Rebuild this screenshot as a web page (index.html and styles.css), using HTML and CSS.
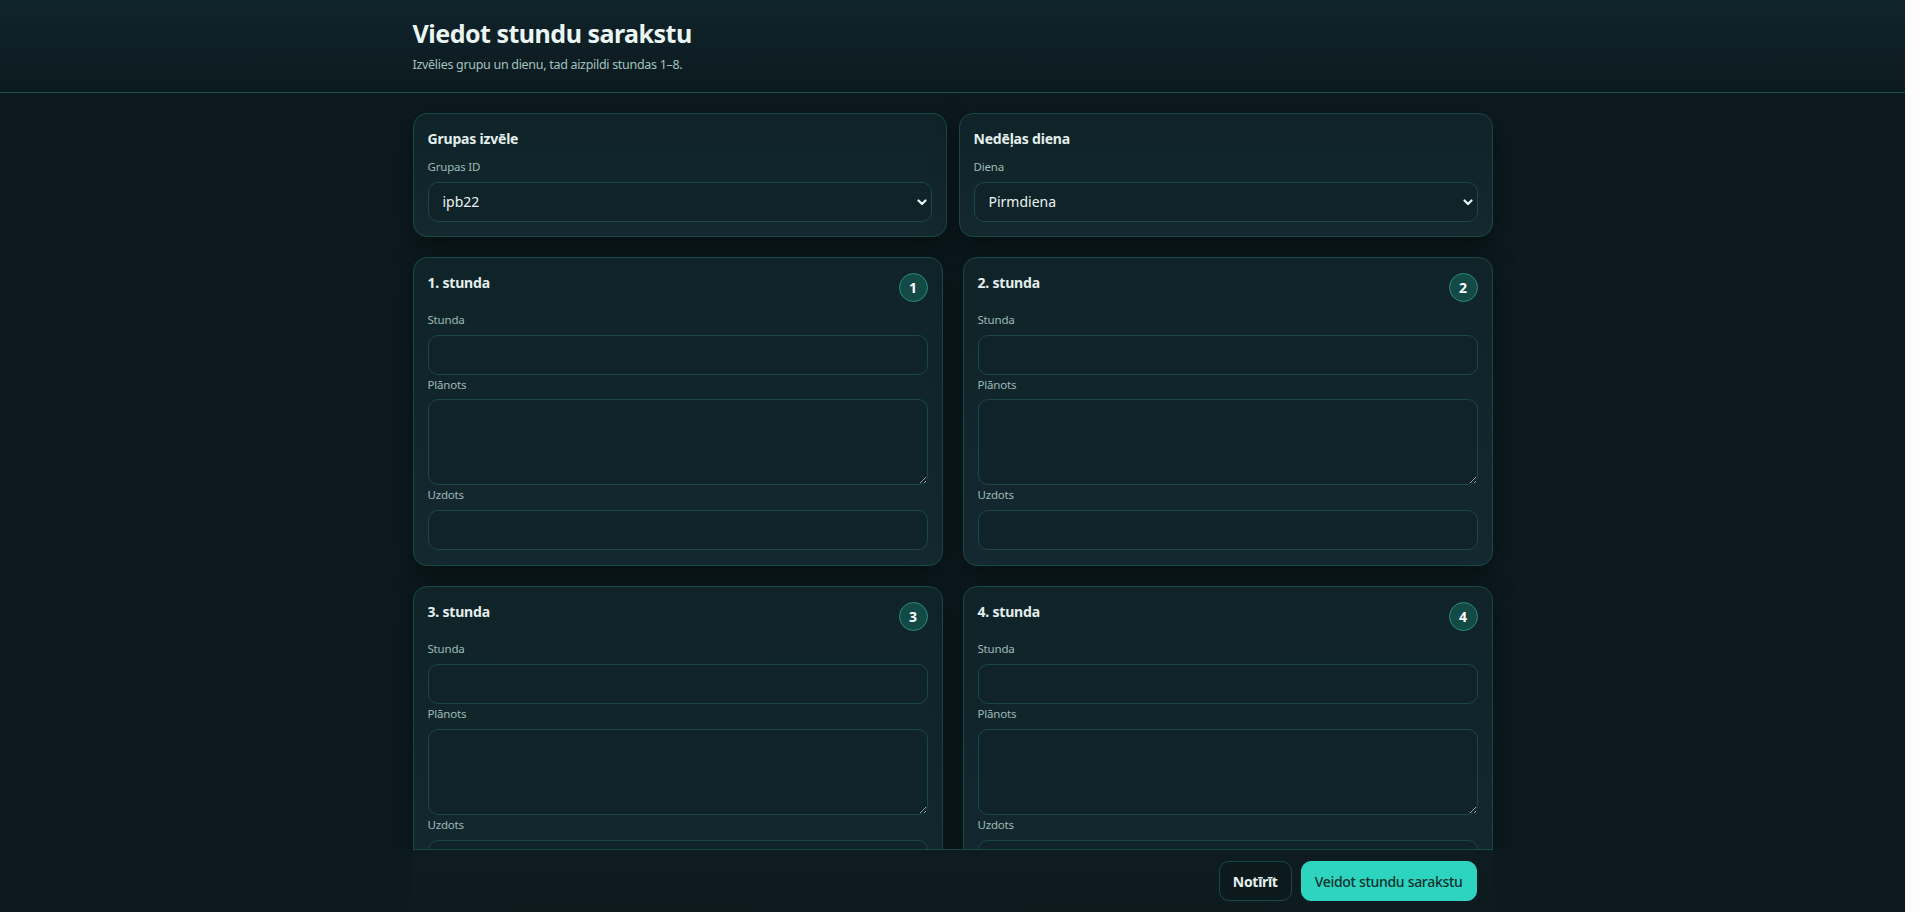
FILE: index.html
```html
<!DOCTYPE html>
<html lang="lv">
<head>
<meta charset="utf-8">
<title>Viedot stundu sarakstu</title>
<link rel="stylesheet" href="styles.css">
</head>
<body>
<header class="topbar">
  <div class="wrap">
    <h1 class="page-title">Viedot stundu sarakstu</h1>
    <p class="page-sub">Izvēlies grupu un dienu, tad aizpildi stundas 1–8.</p>
  </div>
</header>
<main class="scroller">
  <div class="wrap">
    <section class="grid-top">
      <div class="card">
        <h2 class="card-title">Grupas izvēle</h2>
        <label class="lbl">Grupas ID</label>
        <div class="select-wrap">
          <select class="field"><option>ipb22</option></select>
          <svg class="chev" width="10" height="7" viewBox="0 0 10 7"><path d="M1.5 1.5l3.5 3.5 3.5-3.5" fill="none" stroke="#e8f3f1" stroke-width="2.2" stroke-linecap="round" stroke-linejoin="round"/></svg>
        </div>
      </div>
      <div class="card">
        <h2 class="card-title">Nedēļas diena</h2>
        <label class="lbl">Diena</label>
        <div class="select-wrap">
          <select class="field"><option>Pirmdiena</option></select>
          <svg class="chev" width="10" height="7" viewBox="0 0 10 7"><path d="M1.5 1.5l3.5 3.5 3.5-3.5" fill="none" stroke="#e8f3f1" stroke-width="2.2" stroke-linecap="round" stroke-linejoin="round"/></svg>
        </div>
      </div>
    </section>

    <section class="grid-lessons">
      <div class="card lesson">
        <div class="lesson-head"><h3 class="card-title">1. stunda</h3><span class="badge">1</span></div>
        <label class="lbl">Stunda</label><input class="field" type="text">
        <label class="lbl">Plānots</label><textarea class="field area"></textarea>
        <label class="lbl">Uzdots</label><input class="field" type="text">
      </div>
      <div class="card lesson">
        <div class="lesson-head"><h3 class="card-title">2. stunda</h3><span class="badge">2</span></div>
        <label class="lbl">Stunda</label><input class="field" type="text">
        <label class="lbl">Plānots</label><textarea class="field area"></textarea>
        <label class="lbl">Uzdots</label><input class="field" type="text">
      </div>
      <div class="card lesson">
        <div class="lesson-head"><h3 class="card-title">3. stunda</h3><span class="badge">3</span></div>
        <label class="lbl">Stunda</label><input class="field" type="text">
        <label class="lbl">Plānots</label><textarea class="field area"></textarea>
        <label class="lbl">Uzdots</label><input class="field" type="text">
      </div>
      <div class="card lesson">
        <div class="lesson-head"><h3 class="card-title">4. stunda</h3><span class="badge">4</span></div>
        <label class="lbl">Stunda</label><input class="field" type="text">
        <label class="lbl">Plānots</label><textarea class="field area"></textarea>
        <label class="lbl">Uzdots</label><input class="field" type="text">
      </div>
      <div class="card lesson">
        <div class="lesson-head"><h3 class="card-title">5. stunda</h3><span class="badge">5</span></div>
        <label class="lbl">Stunda</label><input class="field" type="text">
        <label class="lbl">Plānots</label><textarea class="field area"></textarea>
        <label class="lbl">Uzdots</label><input class="field" type="text">
      </div>
      <div class="card lesson">
        <div class="lesson-head"><h3 class="card-title">6. stunda</h3><span class="badge">6</span></div>
        <label class="lbl">Stunda</label><input class="field" type="text">
        <label class="lbl">Plānots</label><textarea class="field area"></textarea>
        <label class="lbl">Uzdots</label><input class="field" type="text">
      </div>
      <div class="card lesson">
        <div class="lesson-head"><h3 class="card-title">7. stunda</h3><span class="badge">7</span></div>
        <label class="lbl">Stunda</label><input class="field" type="text">
        <label class="lbl">Plānots</label><textarea class="field area"></textarea>
        <label class="lbl">Uzdots</label><input class="field" type="text">
      </div>
      <div class="card lesson">
        <div class="lesson-head"><h3 class="card-title">8. stunda</h3><span class="badge">8</span></div>
        <label class="lbl">Stunda</label><input class="field" type="text">
        <label class="lbl">Plānots</label><textarea class="field area"></textarea>
        <label class="lbl">Uzdots</label><input class="field" type="text">
      </div>
    </section>
  </div>
</main>
<footer class="wrap actions">
  <button class="btn btn-ghost" type="button">Notīrīt</button>
  <button class="btn btn-primary" type="button">Veidot stundu sarakstu</button>
</footer>
</body>
</html>
```
FILE: styles.css
```css
html {
  background: #fcfcfc;
}
* {
  box-sizing: border-box;
}
body {
  margin: 0 15px 0 0;
  height: 100vh;
  overflow: hidden;
  display: flex;
  flex-direction: column;
  font-family: "Noto Sans", "Open Sans", sans-serif;
  color: #e6f3f1;
  background: #0c191e;
}
.wrap {
  width: 1080px;
  margin: 0 auto;
}
.topbar {
  flex: none;
  background: linear-gradient(180deg, #10242b 0%, #0c1a1f 100%);
  border-bottom: 1px solid #1b5451;
  padding: 18px 0 18px;
}
.page-title {
  margin: 0 0 7px;
  font-size: 25px;
  line-height: 31px;
  font-weight: 700;
  color: #e9f6f4;
  letter-spacing: -0.5px;
}
.page-sub {
  margin: 0;
  font-size: 12.5px;
  line-height: 18px;
  color: #a3c2be;
  letter-spacing: -0.3px;
}
.scroller {
  flex: 1;
  min-height: 0;
  overflow: hidden;
  padding-top: 20px;
}
.grid-top {
  display: grid;
  grid-template-columns: 1fr 1fr;
  gap: 12px;
  margin-bottom: 20px;
}
.grid-lessons {
  display: grid;
  grid-template-columns: 1fr 1fr;
  gap: 20px;
}
.card {
  background: linear-gradient(180deg, #0f2328 0%, #13292f 100%);
  border: 1px solid #1a4845;
  border-radius: 14px;
  padding: 15px 14px 14px;
  box-shadow: 0 10px 28px rgba(0, 0, 0, 0.35);
  display: flex;
  flex-direction: column;
}
.lesson {
  padding-bottom: 15px;
}
.card-title {
  margin: 0 0 11px;
  font-size: 14px;
  line-height: 19px;
  font-weight: 700;
  color: #e3efed;
  letter-spacing: -0.2px;
}
.lesson-head {
  display: flex;
  justify-content: space-between;
  align-items: flex-start;
  margin-bottom: 10px;
}
.lesson-head .card-title {
  margin: 0;
}
.badge {
  width: 29px;
  height: 29px;
  border-radius: 50%;
  background: #134a45;
  border: 1px solid #2a8b7f;
  color: #ffffff;
  font-size: 14px;
  font-weight: 700;
  display: flex;
  align-items: center;
  justify-content: center;
}
.lbl {
  display: block;
  font-size: 11.5px;
  line-height: 16.8px;
  color: #9dbbb7;
  margin: 2px 0 6px;
  letter-spacing: -0.2px;
}
.card-title + .lbl,
.lesson-head + .lbl {
  margin-top: 0;
}
.field {
  display: block;
  width: 100%;
  height: 40px;
  background: #0f2329;
  border: 1px solid #1b4845;
  border-radius: 10px;
  color: #e8f3f1;
  font-family: inherit;
  font-size: 14px;
  padding: 0 14px;
  outline: none;
}
.area {
  height: 86px;
  padding: 10px 14px;
  resize: vertical;
}
.select-wrap {
  position: relative;
}
.select-wrap select {
  appearance: none;
  -webkit-appearance: none;
}
.chev {
  position: absolute;
  right: 5px;
  top: 17px;
  pointer-events: none;
}
.actions {
  flex: none;
  display: flex;
  justify-content: flex-end;
  gap: 9px;
  padding: 11px 16px 11px;
  background: linear-gradient(180deg, #0e1c21 0%, #0d1a1e 100%);
  border-top: 1px solid #1a4845;
}
.btn {
  height: 40px;
  border-radius: 10px;
  font-family: inherit;
  font-size: 14px;
  padding: 0 13px;
  cursor: pointer;
  letter-spacing: -0.3px;
}
.btn-ghost {
  background: #0c1a1e;
  border: 1px solid #1a4845;
  color: #e6f1ef;
  font-weight: 700;
}
.btn-primary {
  background: #2dd4bf;
  border: 1px solid #2dd4bf;
  color: #0f2f2d;
  font-weight: 500;
}
```
